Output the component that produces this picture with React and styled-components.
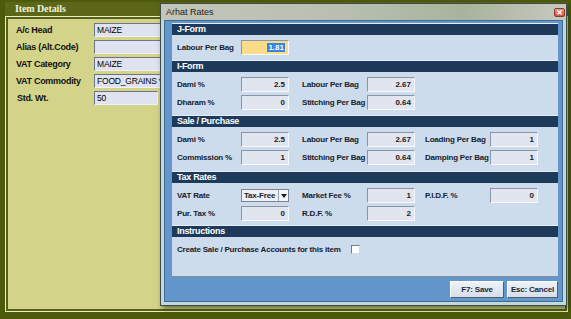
import React from 'react';
import styled, { createGlobalStyle } from 'styled-components';

const GlobalStyle = createGlobalStyle`
  html, body {
    margin: 0;
    padding: 0;
    overflow: hidden;
  }
  body {
    font-family: "Liberation Sans", Arial, sans-serif;
  }
`;

const Screen = styled.div`
  position: relative;
  width: 571px;
  height: 319px;
  box-sizing: border-box;
  background: #4d5a0c;
  padding: 2px 3px 7px 5px;
  display: flex;
`;

const ItemPanel = styled.div`
  flex: 1;
  display: flex;
  flex-direction: column;
`;

const PanelHeader = styled.div`
  height: 14px;
  background: #5b6619;
  color: #f2f2d6;
  font-family: "Liberation Serif", "Times New Roman", serif;
  font-weight: bold;
  font-size: 10px;
  letter-spacing: -0.1px;
  line-height: 14px;
  padding-left: 10px;
`;

const PanelBody = styled.div`
  flex: 1;
  background: #d3d48a;
  border: 1px solid #eef0b8;
  box-shadow: inset 0 0 0 2px #55611a;
  padding: 6px 0 0 10px;
  display: flex;
  flex-direction: column;
  gap: 3px;
`;

const MainRow = styled.div`
  display: flex;
  align-items: center;
  height: 14px;
`;

const MainLabel = styled.div`
  width: ${p => (p.$indent ? 77 : 78)}px;
  padding-left: ${p => (p.$indent ? 1 : 0)}px;
  font-weight: bold;
  font-size: 9px;
  letter-spacing: -0.3px;
  color: #111;
`;

const MainInput = styled.div`
  width: ${p => p.$width}px;
  height: 14px;
  box-sizing: border-box;
  background: #dfe3f0;
  border: 1px solid;
  border-color: #6f7484 #f0f2f8 #f0f2f8 #6f7484;
  font-size: 8.5px;
  letter-spacing: -0.2px;
  line-height: 12px;
  padding-left: 2px;
  color: #000;
  white-space: nowrap;
  overflow: hidden;
`;

const Window = styled.div`
  position: absolute;
  left: 160px;
  top: 3px;
  width: 407px;
  box-sizing: border-box;
  border: 1px solid #3e4a4c;
  background: #c2d8da;
  box-shadow: 2px 3px 5px rgba(30, 40, 0, 0.55);
  display: flex;
  flex-direction: column;
`;

const TitleBar = styled.div`
  height: 16px;
  display: flex;
  align-items: center;
  justify-content: space-between;
  padding: 0 1px 0 5px;
  background: linear-gradient(90deg, #c2c6ba 0%, #b8bfb0 45%, #a9b39c 75%, #c6cabe 100%);
`;

const Title = styled.span`
  font-size: 9px;
  color: #1c1c1c;
`;

const CloseButton = styled.div`
  width: 11px;
  height: 9px;
  margin-top: 1px;
  border-radius: 2px;
  border: 1px solid #8a3a30;
  box-sizing: border-box;
  background: linear-gradient(#f09a88, #d4523e);
  display: flex;
  align-items: center;
  justify-content: center;
`;

const Client = styled.div`
  padding: 0 3px 3px 3px;
`;

const BlueFrame = styled.div`
  background: #6397cb;
  border: 1px solid #3f6a94;
  padding: 2px 4px 3px 7px;
  display: flex;
  flex-direction: column;
  gap: 4px;
`;

const Sheet = styled.div`
  height: 253px;
  background: #cddcec;
  border-bottom: 1px solid #7d8da0;
  display: flex;
  flex-direction: column;
`;

const Section = styled.div`
  display: flex;
  flex-direction: column;
  flex: ${p => (p.$grow ? 1 : 'none')};
  border-top: 1px solid #e4eef8;
`;

const SectionHeader = styled.div`
  height: 11px;
  background: #1d3a5a;
  color: #ffffff;
  font-weight: bold;
  font-size: 9px;
  letter-spacing: -0.3px;
  line-height: 11px;
  padding-left: 5px;
`;

const SectionBody = styled.div`
  display: flex;
  flex-direction: column;
  gap: 3px;
  padding: 5px 0 ${p => p.$bottom}px 5px;
`;

const Row = styled.div`
  display: flex;
  align-items: center;
  height: 15px;
`;

const labelWidths = [64, 65, 65];
const labelGaps = [0, 13, 10];

const Label = styled.div`
  width: ${p => labelWidths[p.$col]}px;
  margin-left: ${p => labelGaps[p.$col]}px;
  font-weight: bold;
  font-size: 8px;
  letter-spacing: -0.2px;
  color: #16202c;
  white-space: nowrap;
`;

const ValueBox = styled.div`
  width: 48px;
  height: 15px;
  box-sizing: border-box;
  background: ${p => (p.$highlight ? '#f8dc88' : '#e1e5f0')};
  border: 1px solid;
  border-color: #8a94a4 #f6f8fc #f6f8fc #8a94a4;
  text-align: right;
  padding-right: 3px;
  font-weight: bold;
  font-size: 8px;
  line-height: 13px;
  color: #1a1a22;
`;

const Selected = styled.span`
  background: #3585e2;
  color: #ffffff;
  padding: 0 1px;
`;

const SelectBox = styled.div`
  width: 48px;
  height: 13px;
  box-sizing: border-box;
  background: #eef0f6;
  border: 1px solid #7a8494;
  display: flex;
  align-items: center;
  justify-content: space-between;
  padding-left: 2px;
  font-weight: bold;
  font-size: 8px;
  letter-spacing: -0.2px;
  color: #1a1a22;
`;

const SelectArrow = styled.div`
  width: 10px;
  height: 11px;
  box-sizing: border-box;
  border-left: 1px solid #9aa4b4;
  background: #f4f6fa;
  display: flex;
  align-items: center;
  justify-content: center;
`;

const CheckRow = styled.div`
  display: flex;
  align-items: center;
  gap: 10px;
  height: 12px;
  padding-top: 1px;
`;

const CheckLabel = styled.span`
  font-weight: bold;
  font-size: 8px;
  letter-spacing: -0.2px;
  color: #16202c;
`;

const CheckBox = styled.div`
  width: 9px;
  height: 9px;
  box-sizing: border-box;
  background: #ffffff;
  border: 1px solid;
  border-color: #7a7a7a #d8d8d8 #d8d8d8 #7a7a7a;
`;

const ButtonBar = styled.div`
  display: flex;
  justify-content: flex-end;
  gap: 3px;
`;

const Button = styled.div`
  width: ${p => p.$width}px;
  height: 17px;
  box-sizing: border-box;
  background: linear-gradient(#eef2f8, #d6dee8);
  border: 1px solid;
  border-color: #ffffff #4f5f70 #4f5f70 #ffffff;
  font-weight: bold;
  font-size: 8px;
  letter-spacing: -0.2px;
  line-height: 15px;
  text-align: center;
  color: #1c2838;
`;

const sections = [
  {
    title: 'J-Form',
    bottom: 5,
    rows: [[{ label: 'Labour Per Bag', value: '1.81', highlight: true }]],
  },
  {
    title: 'I-Form',
    bottom: 5,
    rows: [
      [{ label: 'Dami %', value: '2.5' }, { label: 'Labour Per Bag', value: '2.67' }],
      [{ label: 'Dharam %', value: '0' }, { label: 'Stitching Per Bag', value: '0.64' }],
    ],
  },
  {
    title: 'Sale / Purchase',
    bottom: 6,
    rows: [
      [
        { label: 'Dami %', value: '2.5' },
        { label: 'Labour Per Bag', value: '2.67' },
        { label: 'Loading Per Bag', value: '1' },
      ],
      [
        { label: 'Commission %', value: '1' },
        { label: 'Stitching Per Bag', value: '0.64' },
        { label: 'Damping Per Bag', value: '1' },
      ],
    ],
  },
  {
    title: 'Tax Rates',
    bottom: 4,
    rows: [
      [
        { label: 'VAT Rate', select: 'Tax-Free' },
        { label: 'Market Fee %', value: '1' },
        { label: 'P.I.D.F. %', value: '0' },
      ],
      [{ label: 'Pur. Tax %', value: '0' }, { label: 'R.D.F. %', value: '2' }],
    ],
  },
];

const mainFields = [
  { label: 'A/c Head', value: 'MAIZE', width: 80 },
  { label: 'Alias (Alt.Code)', value: '', width: 80 },
  { label: 'VAT Category', value: 'MAIZE', width: 80 },
  { label: 'VAT Commodity', value: 'FOOD_GRAINS *', width: 80 },
  { label: 'Std. Wt.', value: '50', width: 64, indent: true },
];

const Field = ({ field, col }) => (
  <>
    <Label $col={col}>{field.label}</Label>
    {field.select ? (
      <SelectBox>
        {field.select}
        <SelectArrow>
          <svg width="6" height="4" viewBox="0 0 6 4">
            <path d="M0 0h6L3 4z" fill="#1a1a22" />
          </svg>
        </SelectArrow>
      </SelectBox>
    ) : (
      <ValueBox $highlight={field.highlight}>
        {field.highlight ? <Selected>{field.value}</Selected> : field.value}
      </ValueBox>
    )}
  </>
);

const App = () => {
  return (
    <>
      <GlobalStyle />
      <Screen>
        <ItemPanel>
          <PanelHeader>Item Details</PanelHeader>
          <PanelBody>
            {mainFields.map(f => (
              <MainRow key={f.label}>
                <MainLabel $indent={f.indent}>{f.label}</MainLabel>
                <MainInput $width={f.width}>{f.value}</MainInput>
              </MainRow>
            ))}
          </PanelBody>
        </ItemPanel>

        <Window>
          <TitleBar>
            <Title>Arhat Rates</Title>
            <CloseButton>
              <svg width="5" height="5" viewBox="0 0 5 5">
                <path d="M0.5 0.5l4 4M4.5 0.5l-4 4" stroke="#ffffff" strokeWidth="1.2" />
              </svg>
            </CloseButton>
          </TitleBar>
          <Client>
            <BlueFrame>
              <Sheet>
                {sections.map(s => (
                  <Section key={s.title}>
                    <SectionHeader>{s.title}</SectionHeader>
                    <SectionBody $bottom={s.bottom}>
                      {s.rows.map((row, i) => (
                        <Row key={i}>
                          {row.map((field, col) => (
                            <Field key={field.label} field={field} col={col} />
                          ))}
                        </Row>
                      ))}
                    </SectionBody>
                  </Section>
                ))}
                <Section $grow>
                  <SectionHeader>Instructions</SectionHeader>
                  <SectionBody $bottom={0}>
                    <CheckRow>
                      <CheckLabel>Create Sale / Purchase Accounts for this item</CheckLabel>
                      <CheckBox />
                    </CheckRow>
                  </SectionBody>
                </Section>
              </Sheet>
              <ButtonBar>
                <Button $width={54}>F7: Save</Button>
                <Button $width={51}>Esc: Cancel</Button>
              </ButtonBar>
            </BlueFrame>
          </Client>
        </Window>
      </Screen>
    </>
  );
};

export default App;
